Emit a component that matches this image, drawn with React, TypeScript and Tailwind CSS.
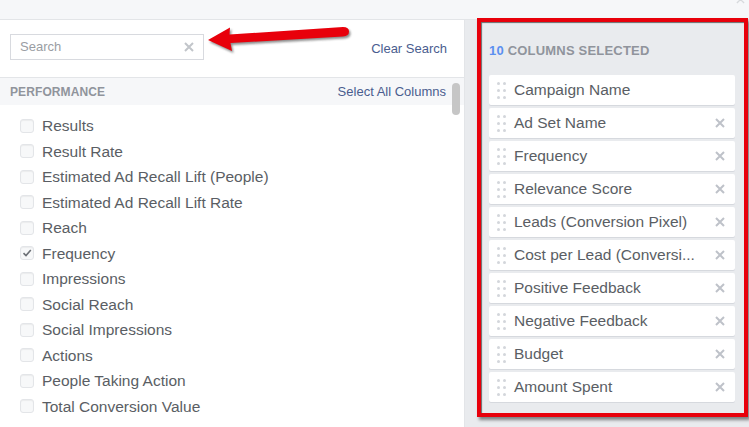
import React from "react";

const leftItems: { label: string; checked?: boolean }[] = [
  { label: "Results" },
  { label: "Result Rate" },
  { label: "Estimated Ad Recall Lift (People)" },
  { label: "Estimated Ad Recall Lift Rate" },
  { label: "Reach" },
  { label: "Frequency", checked: true },
  { label: "Impressions" },
  { label: "Social Reach" },
  { label: "Social Impressions" },
  { label: "Actions" },
  { label: "People Taking Action" },
  { label: "Total Conversion Value" },
];

const selected: { label: string; removable: boolean }[] = [
  { label: "Campaign Name", removable: false },
  { label: "Ad Set Name", removable: true },
  { label: "Frequency", removable: true },
  { label: "Relevance Score", removable: true },
  { label: "Leads (Conversion Pixel)", removable: true },
  { label: "Cost per Lead (Conversi...", removable: true },
  { label: "Positive Feedback", removable: true },
  { label: "Negative Feedback", removable: true },
  { label: "Budget", removable: true },
  { label: "Amount Spent", removable: true },
];

function XIcon({ size = 10, color = "#bec2c9", stroke = 2 }: { size?: number; color?: string; stroke?: number }) {
  return (
    <svg width={size} height={size} viewBox="0 0 10 10">
      <path d="M1 1L9 9M9 1L1 9" stroke={color} strokeWidth={stroke} strokeLinecap="butt" />
    </svg>
  );
}

function Handle() {
  return (
    <div className="grid grid-cols-2 gap-x-[3px] gap-y-[4px]">
      {[0, 1, 2, 3, 4, 5].map((i) => (
        <span key={i} className="block w-[3px] h-[3px] rounded-full bg-[#d3d6db]" />
      ))}
    </div>
  );
}

function Checkbox({ checked }: { checked?: boolean }) {
  return (
    <span className="flex items-center justify-center w-[14px] h-[14px] rounded-[3px] border border-[#e3e5e8] bg-[#f7f8f9] shadow-[inset_0_1px_1px_rgba(0,0,0,0.05)]">
      {checked && (
        <svg width="10" height="10" viewBox="0 0 10 10">
          <path d="M1.5 5.2L4 7.6L8.8 2" stroke="#6b6f75" strokeWidth="1.6" fill="none" />
        </svg>
      )}
    </span>
  );
}

export default function App() {
  return (
    <div
      className="relative w-[749px] h-[427px] overflow-hidden bg-white text-[#55595f]"
      style={{ fontFamily: '"Liberation Sans", Arial, Helvetica, sans-serif' }}
    >
      {/* top strip */}
      <div className="relative h-[20px] bg-[#f6f7f9] border-b border-[#e3e5e8]">
        <div className="absolute right-[4px] top-[-5px] opacity-60">
          <XIcon size={9} color="#c4c7cc" stroke={1.5} />
        </div>
      </div>

      <div className="flex h-[407px]">
        {/* left panel */}
        <div className="relative w-[465px] bg-white border-r border-[#e3e5e8] flex flex-col">
          <div className="flex items-center justify-between pl-[10px] pr-[17px] pt-[14px] pb-[17px] border-b border-[#e3e5e8]">
            <div className="flex items-center justify-between w-[194px] h-[26px] border border-[#d8dadf] pl-[9px] pr-[9px]">
              <span className="text-[13px] text-[#9a9da3]">Search</span>
              <XIcon size={10} color="#c2c5ca" stroke={2} />
            </div>
            <span className="text-[13px] text-[#4a5d8f] mt-[4px]">Clear Search</span>
          </div>
          <div className="flex items-center justify-between h-[27px] bg-[#f6f7f9] pl-[10px] pr-[18px] pt-[1px]">
            <span className="text-[12px] font-bold text-[#90949c] tracking-[0.1px]">PERFORMANCE</span>
            <span className="text-[13px] text-[#4a5d8f]">Select All Columns</span>
          </div>
          <div className="flex flex-col pt-[8px] pl-[20px]">
            {leftItems.map((it) => (
              <div key={it.label} className="flex items-center h-[25.5px] gap-[8px]">
                <Checkbox checked={it.checked} />
                <span className="text-[15.5px] leading-none text-[#5a5e64]">{it.label}</span>
              </div>
            ))}
          </div>
          {/* scrollbar */}
          <div className="absolute left-[452px] top-[63px] w-[8px] h-[32px] rounded-full bg-[#c6c6c6]" />
        </div>

        {/* right panel */}
        <div className="flex-1 bg-[#e9ebee] pl-[24px] pr-[14px] pt-[23px]">
          <div className="text-[13px] font-bold leading-[16px] text-[#90949c] tracking-[0.2px]">
            <span className="text-[#5b8ff0]">10</span> COLUMNS SELECTED
          </div>
          <div className="flex flex-col gap-[3px] mt-[16px]">
            {selected.map((s) => (
              <div
                key={s.label}
                className="flex items-center h-[30px] bg-white rounded-[2px] shadow-[0_1px_0_#d6d9de] pl-[8px] pr-[10px]"
              >
                <Handle />
                <span className="ml-[8px] flex-1 text-[15.5px] text-[#5a5e64] whitespace-nowrap">{s.label}</span>
                {s.removable && <XIcon size={10} color="#bec2c9" stroke={2} />}
              </div>
            ))}
          </div>
        </div>
      </div>

      {/* red annotation frame */}
      <div className="absolute left-[477px] top-[18px] w-[271px] h-[399px] border-[4px] border-[#e8000b] shadow-[2px_3px_3px_rgba(0,0,0,0.45),inset_1px_1px_1px_rgba(0,0,0,0.55)] pointer-events-none" />

      {/* red arrow annotation */}
      <svg className="absolute left-0 top-0 pointer-events-none" width="749" height="427">
        <defs>
          <filter id="sh" x="-10%" y="-50%" width="130%" height="200%">
            <feGaussianBlur stdDeviation="1.2" />
          </filter>
        </defs>
        <path
          d="M208 40 L230 27.5 L229.5 34.5 L343 27 Q349 27 349 31.5 Q349 36 343 36.5 L230.5 43 L232 51 Z"
          fill="#333"
          opacity="0.55"
          transform="translate(1.5 2)"
          filter="url(#sh)"
        />
        <path
          d="M208 40 L230 27.5 L229.5 34.5 L343 27 Q349 27 349 31.5 Q349 36 343 36.5 L230.5 43 L232 51 Z"
          fill="#e8000b"
        />
      </svg>
    </div>
  );
}
